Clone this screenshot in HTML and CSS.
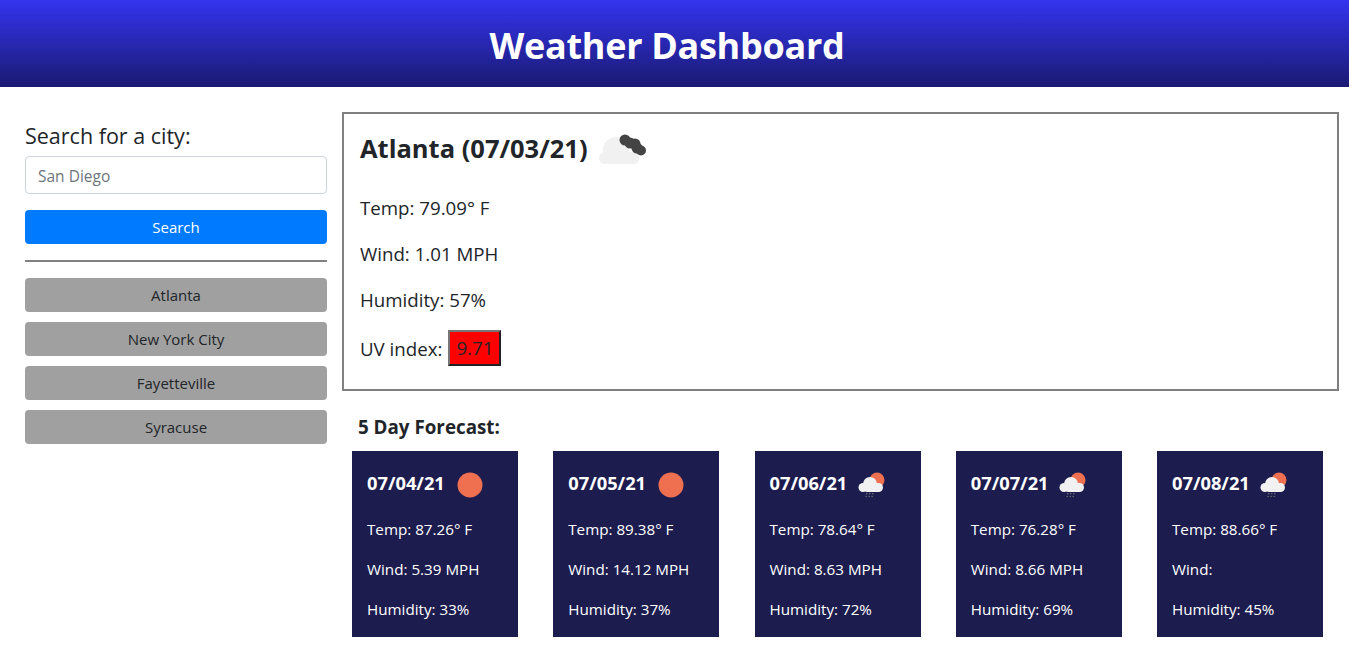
FILE: index.html
```html
<!DOCTYPE html>
<html lang="en">
<head>
<meta charset="utf-8">
<title>Weather Dashboard</title>
<link rel="stylesheet" href="styles.css">
</head>
<body>
<svg class="defs" width="0" height="0" aria-hidden="true">
  <symbol id="clouds" viewBox="0 0 50 50">
    <g fill="#f1f1f1">
      <circle cx="7" cy="34" r="6"/>
      <circle cx="18" cy="26" r="13"/>
      <rect x="7" y="28" width="34" height="12" rx="5"/>
    </g>
    <g fill="#444">
      <circle cx="27" cy="16" r="5.500"/>
      <circle cx="32" cy="19" r="5.500"/>
      <circle cx="37" cy="20" r="5.500"/>
      <circle cx="39" cy="24" r="5.500"/>
      <circle cx="43" cy="26.500" r="5"/>
    </g>
  </symbol>
  <symbol id="sun" viewBox="0 0 50 50">
    <circle cx="25" cy="25" r="12.500" fill="#ee7050"/>
  </symbol>
  <symbol id="rain" viewBox="0 0 50 50">
    <circle cx="29" cy="20" r="7.500" fill="#ee7050"/>
    <g fill="#f1f1f1">
      <circle cx="15" cy="27.500" r="4.500"/>
      <circle cx="22" cy="24" r="7"/>
      <rect x="15" y="23" width="20" height="9" rx="4.500"/>
    </g>
    <path fill="none" stroke="#777" stroke-width="1.200" stroke-dasharray="1.500 1.500" d="M19 33l-1 4M22 33l-1 4M25 33l-1 4"/>
  </symbol>
</svg>

<header class="top">
  <h1 class="title">Weather Dashboard</h1>
</header>

<main class="layout">
  <aside class="side">
    <h2 class="side-title">Search for a city:</h2>
    <input class="city-input" type="text" placeholder="San Diego">
    <button class="btn btn-search" type="button">Search</button>
    <hr class="rule">
    <div class="history">
      <button class="btn btn-city" type="button">Atlanta</button>
      <button class="btn btn-city" type="button">New York City</button>
      <button class="btn btn-city" type="button">Fayetteville</button>
      <button class="btn btn-city" type="button">Syracuse</button>
    </div>
  </aside>

  <section class="content">
    <div class="today">
      <div class="today-head">
        <h2 class="today-title">Atlanta (07/03/21)</h2>
        <svg class="icon today-icon"><use href="#clouds"/></svg>
      </div>
      <p class="today-line">Temp: 79.09° F</p>
      <p class="today-line">Wind: 1.01 MPH</p>
      <p class="today-line">Humidity: 57%</p>
      <p class="today-line today-uv">UV index: <span class="uv">9.71</span></p>
    </div>

    <h3 class="forecast-title">5 Day Forecast:</h3>
    <div class="forecast">
      <article class="day">
        <div class="day-head"><span class="day-date">07/04/21</span><svg class="icon"><use href="#sun"/></svg></div>
        <p class="day-line">Temp: 87.26° F</p>
        <p class="day-line">Wind: 5.39 MPH</p>
        <p class="day-line">Humidity: 33%</p>
      </article>
      <article class="day">
        <div class="day-head"><span class="day-date">07/05/21</span><svg class="icon"><use href="#sun"/></svg></div>
        <p class="day-line">Temp: 89.38° F</p>
        <p class="day-line">Wind: 14.12 MPH</p>
        <p class="day-line">Humidity: 37%</p>
      </article>
      <article class="day">
        <div class="day-head"><span class="day-date">07/06/21</span><svg class="icon"><use href="#rain"/></svg></div>
        <p class="day-line">Temp: 78.64° F</p>
        <p class="day-line">Wind: 8.63 MPH</p>
        <p class="day-line">Humidity: 72%</p>
      </article>
      <article class="day">
        <div class="day-head"><span class="day-date">07/07/21</span><svg class="icon"><use href="#rain"/></svg></div>
        <p class="day-line">Temp: 76.28° F</p>
        <p class="day-line">Wind: 8.66 MPH</p>
        <p class="day-line">Humidity: 69%</p>
      </article>
      <article class="day">
        <div class="day-head"><span class="day-date">07/08/21</span><svg class="icon"><use href="#rain"/></svg></div>
        <p class="day-line">Temp: 88.66° F</p>
        <p class="day-line">Wind:</p>
        <p class="day-line">Humidity: 45%</p>
      </article>
    </div>
  </section>
</main>
</body>
</html>
```

FILE: styles.css
```css
* { box-sizing: border-box; }

html, body { margin: 0; height: 100%; overflow: hidden; }

body {
  font-family: "Open Sans", "Noto Sans", "Liberation Sans", sans-serif;
  color: #212529;
  background: #fff;
  font-size: 16px;
}

.defs { position: absolute; }

.top {
  height: 87px;
  display: flex;
  align-items: center;
  justify-content: center;
  padding: 4px 15px 0 0;
  background: linear-gradient(to bottom, #3434f0, #1a1a72);
}

.title {
  margin: 0;
  font-size: 36px;
  font-weight: 700;
  color: #fff;
  line-height: 1.2;
  letter-spacing: -0.3px;
}

.layout {
  display: flex;
  padding: 25px 10px 0 25px;
  gap: 15px;
}

.side {
  width: 302px;
  flex: none;
  padding-top: 9px;
  display: flex;
  flex-direction: column;
}

.side-title {
  margin: 0 0 6px;
  font-size: 21.500px;
  font-weight: 500;
  line-height: 29px;
}

.city-input {
  height: 38px;
  width: 100%;
  padding: 7px 12px 5px;
  border: 1px solid #ced4da;
  border-radius: 4px;
  font: inherit;
  font-size: 15.500px;
  color: #495057;
}

.city-input::placeholder { color: #6c757d; opacity: 1; }

.btn {
  display: block;
  width: 100%;
  height: 34px;
  border: 0;
  border-radius: 4px;
  font: inherit;
  font-size: 15px;
  padding: 0;
}

.btn-search {
  margin-top: 16px;
  background: #007bff;
  color: #fff;
}

.rule {
  width: 100%;
  margin: 16px 0;
  border: 0;
  border-top: 2px solid #808080;
}

.history {
  display: flex;
  flex-direction: column;
  gap: 10px;
}

.btn-city {
  background: #a0a0a0;
  color: #212529;
}

.content {
  flex: 1;
  min-width: 0;
}

.today {
  height: 279px;
  border: 2px solid #808080;
  padding: 10px 16px;
}

.today-head {
  display: flex;
  align-items: center;
  gap: 10px;
  height: 50px;
  margin-bottom: 20px;
}

.today-title {
  margin: -2px 0 0;
  font-size: 25.500px;
  font-weight: 700;
  line-height: 1.2;
}

.icon {
  width: 50px;
  height: 50px;
  flex: none;
}

.today-line {
  margin: 0;
  font-size: 18.700px;
  line-height: 27px;
  padding-bottom: 19px;
}

.today-uv {
  padding: 0;
  display: flex;
  align-items: center;
  gap: 6px;
  margin-top: -2px;
}

.uv {
  display: block;
  width: 53px;
  height: 36px;
  line-height: 32px;
  text-align: center;
  background: #f00;
  color: #212529;
  border: 2px solid;
  border-color: #767676 #222 #222 #767676;
}

.forecast-title {
  margin: 24px 0 0 16px;
  font-size: 18.800px;
  font-weight: 700;
  line-height: 25px;
}

.forecast {
  margin: 11px 16px 0 10px;
  display: flex;
  justify-content: space-between;
}

.day {
  width: 166px;
  height: 186px;
  background: #1c1c4e;
  color: #fff;
  padding: 9px 15px 0;
}

.day-head {
  display: flex;
  align-items: center;
  height: 50px;
  margin-bottom: 8px;
}

.day-date {
  width: 78px;
  flex: none;
  font-size: 18.300px;
  font-weight: 700;
  margin-top: -6px;
}

.day-line {
  margin: 0;
  font-size: 15.200px;
  line-height: 22px;
  padding-bottom: 18px;
}
```
